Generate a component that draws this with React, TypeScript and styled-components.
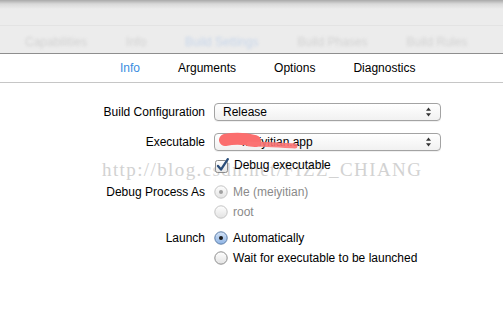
import styled, { createGlobalStyle } from "styled-components";

const GlobalStyle = createGlobalStyle`
  html, body {
    margin: 0;
    padding: 0;
    background: #ffffff;
  }
  body {
    font-family: "Liberation Sans", "DejaVu Sans", sans-serif;
    font-size: 12px;
    color: #000;
  }
`;

const Page = styled.div`
  position: relative;
  width: 503px;
  height: 319px;
  overflow: hidden;
  background: #fff;
`;

const Toolbar = styled.div`
  height: 53px;
  background: linear-gradient(#a9a9a9 0px, #d9d9d9 4px, #ececec 9px, #ececec 100%);
  border-bottom: 1px solid #8e8e8e;
  display: flex;
  flex-direction: column;
`;

const ToolbarTop = styled.div`
  height: 25px;
  border-bottom: 1px solid #e3e3e3;
`;

const BlurTabs = styled.div`
  flex: 1;
  display: flex;
  align-items: center;
  padding-left: 25px;
  gap: 39px;
  filter: blur(1.4px);
`;

const BlurTab = styled.span<{ $active?: boolean }>`
  color: ${(p) => (p.$active ? "#c6d5ea" : "#d2d2d2")};
  font-size: 12px;
  padding-top: 4px;
`;

const TabBar = styled.div`
  height: 28px;
  border-bottom: 1px solid #c6c6c6;
  display: flex;
  align-items: center;
  padding-left: 120px;
  gap: 38px;
`;

const Tab = styled.span<{ $active?: boolean }>`
  color: ${(p) => (p.$active ? "#3b8de0" : "#000")};
  font-size: 12px;
`;

const Form = styled.div`
  position: relative;
  z-index: 1;
  display: flex;
  flex-direction: column;
  padding-top: 20px;
`;

const Row = styled.div<{ $top?: number }>`
  display: grid;
  grid-template-columns: 205px 227px;
  column-gap: 9px;
  align-items: center;
  margin-top: ${(p) => p.$top ?? 0}px;
`;

const Label = styled.span`
  text-align: right;
  white-space: nowrap;
`;

const Popup = styled.div`
  position: relative;
  height: 16px;
  border: 1px solid #a3a3a3;
  border-radius: 4px;
  background: linear-gradient(#ffffff, #f1f1f1);
  box-shadow: 0 1px 0 rgba(0, 0, 0, 0.06);
  display: flex;
  align-items: center;
  padding: 0 8px;
  justify-content: space-between;
`;

const PopupText = styled.span<{ $indent?: number }>`
  padding-left: ${(p) => p.$indent ?? 0}px;
`;

const Redaction = styled.svg`
  position: absolute;
  left: 4px;
  top: -2px;
`;

const Option = styled.label<{ $disabled?: boolean }>`
  display: flex;
  align-items: center;
  gap: 5px;
  height: 20px;
  color: ${(p) => (p.$disabled ? "#8a8a8a" : "#000")};
  white-space: nowrap;
`;

const Watermark = styled.div`
  position: absolute;
  z-index: 0;
  left: 102px;
  top: 159px;
  font-family: "Liberation Serif", "DejaVu Serif", serif;
  font-size: 19px;
  letter-spacing: 1.4px;
  color: #d2d2d2;
  pointer-events: none;
  white-space: nowrap;
`;

const Arrows = () => (
  <svg width="7" height="10" viewBox="0 0 7 10">
    <path d="M3.5 0.5 L6 3.8 H1 Z" fill="#333" />
    <path d="M3.5 9.5 L6 6.2 H1 Z" fill="#333" />
  </svg>
);

const Checkbox = () => (
  <svg width="15" height="15" viewBox="0 0 15 15">
    <defs>
      <linearGradient id="cb" x1="0" y1="0" x2="0" y2="1">
        <stop offset="0" stopColor="#ffffff" />
        <stop offset="1" stopColor="#e6e6e6" />
      </linearGradient>
    </defs>
    <rect x="1.5" y="2.5" width="12" height="12" rx="2" fill="url(#cb)" stroke="#8c8c8c" />
    <path d="M4 8 L7 11.6 L13.8 1.2" fill="none" stroke="#2a4d7a" strokeWidth="2.3" strokeLinecap="round" strokeLinejoin="round" />
  </svg>
);

const Radio = ({ on, disabled }: { on?: boolean; disabled?: boolean }) => (
  <svg width="14" height="14" viewBox="0 0 14 14">
    <defs>
      <linearGradient id="rg" x1="0" y1="0" x2="0" y2="1">
        <stop offset="0" stopColor="#ffffff" />
        <stop offset="1" stopColor="#e2e2e2" />
      </linearGradient>
      <linearGradient id="rb" x1="0" y1="0" x2="0" y2="1">
        <stop offset="0" stopColor="#d5e4f7" />
        <stop offset="1" stopColor="#8db3e4" />
      </linearGradient>
    </defs>
    <circle
      cx="7"
      cy="7"
      r="6.2"
      fill={on && !disabled ? "url(#rb)" : "url(#rg)"}
      stroke={disabled ? "#c4c4c4" : on ? "#5f7fa8" : "#8d8d8d"}
    />
    {on && <circle cx="7" cy="7" r="2" fill={disabled ? "#a0a0a0" : "#1a1a1a"} />}
  </svg>
);

export default function App() {
  return (
    <Page>
      <GlobalStyle />
      <Toolbar>
        <ToolbarTop />
        <BlurTabs>
          <BlurTab>Capabilities</BlurTab>
          <BlurTab>Info</BlurTab>
          <BlurTab $active>Build Settings</BlurTab>
          <BlurTab>Build Phases</BlurTab>
          <BlurTab>Build Rules</BlurTab>
        </BlurTabs>
      </Toolbar>
      <TabBar>
        <Tab $active>Info</Tab>
        <Tab>Arguments</Tab>
        <Tab>Options</Tab>
        <Tab>Diagnostics</Tab>
      </TabBar>
      <Watermark>http://blog.csdn.net/FIZZ_CHIANG</Watermark>
      <Form>
        <Row>
          <Label>Build Configuration</Label>
          <Popup>
            <PopupText>Release</PopupText>
            <Arrows />
          </Popup>
        </Row>
        <Row $top={12}>
          <Label>Executable</Label>
          <Popup>
            <PopupText $indent={19}>meiyitian.app</PopupText>
            <Arrows />
            <Redaction width="90" height="22" viewBox="0 0 90 22">
              <path d="M6 8 C 16 6, 28 7, 36 9" stroke="#fb6e6e" strokeWidth="12" strokeLinecap="round" fill="none" />
              <path d="M30 12 C 45 12, 60 13, 76 14" stroke="#fb7373" strokeWidth="5" strokeLinecap="round" fill="none" opacity="0.9" />
            </Redaction>
          </Popup>
        </Row>
        <Row $top={4}>
          <span />
          <Option>
            <Checkbox />
            Debug executable
          </Option>
        </Row>
        <Row $top={7}>
          <Label>Debug Process As</Label>
          <Option $disabled>
            <Radio on disabled />
            Me (meiyitian)
          </Option>
        </Row>
        <Row>
          <span />
          <Option $disabled>
            <Radio disabled />
            root
          </Option>
        </Row>
        <Row $top={6}>
          <Label>Launch</Label>
          <Option>
            <Radio on />
            Automatically
          </Option>
        </Row>
        <Row>
          <span />
          <Option>
            <Radio />
            Wait for executable to be launched
          </Option>
        </Row>
      </Form>
    </Page>
  );
}
